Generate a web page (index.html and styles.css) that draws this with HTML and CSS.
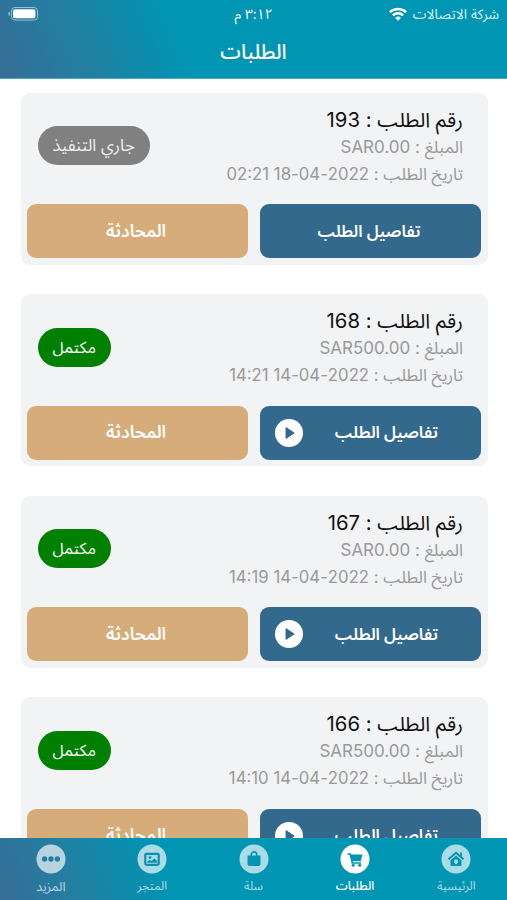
FILE: index.html
```html
<!DOCTYPE html>
<html lang="ar" dir="rtl">
<head>
<meta charset="utf-8">
<title>الطلبات</title>
<link rel="stylesheet" href="styles.css">
</head>
<body>
<div class="screen">
  <header class="header">
    <div class="status">
      <div class="carrier"><span class="ar carrier-name">شركة الاتصالات</span>
        <svg class="wifi" viewBox="0 0 18 14"><g fill="none" stroke="#fff" stroke-width="2.5"><path d="M.9 5.2a11.6 11.6 0 0 1 16.2 0"/><path d="M3.9 8.4a7.4 7.4 0 0 1 10.2 0"/></g><path fill="#fff" d="M9 13.8 6.1 10.9a4.1 4.1 0 0 1 5.8 0z"/></svg>
      </div>
      <div class="clock"><span class="ar">٣:١٢ م</span></div>
      <div class="power"><svg class="battery" viewBox="0 0 30 14"><rect x="3.5" y=".5" width="26" height="12.6" rx="3.5" fill="none" stroke="#8fc5d4"/><rect x="5" y="2.3" width="22.4" height="9" rx="2" fill="#fff"/><path d="M2 4.8v4C.7 8.400.3 7.700.3 6.800S.7 5.200 2 4.800z" fill="#8fc5d4"/></svg></div>
    </div>
    <h1 class="title"><span class="ar">الطلبات</span></h1>
  </header>
  <main class="orders">
    <article class="card">
      <div class="info">
        <div class="lines">
          <div class="number"><span class="ar">رقم الطلب</span> : <span class="num">193</span></div>
          <div class="meta"><span class="ar">المبلغ</span> : SAR0.00</div>
          <div class="meta date"><span class="ar">تاريخ الطلب</span> : 2022-04-18 02:21</div>
        </div>
        <span class="badge pending"><span class="ar">جاري التنفيذ</span></span>
      </div>
      <div class="actions"><div class="btn details"><span class="ar">تفاصيل الطلب</span></div><div class="btn chat"><span class="ar">المحادثة</span></div></div>
    </article>
    <article class="card">
      <div class="info">
        <div class="lines">
          <div class="number"><span class="ar">رقم الطلب</span> : <span class="num">168</span></div>
          <div class="meta"><span class="ar">المبلغ</span> : SAR500.00</div>
          <div class="meta date"><span class="ar">تاريخ الطلب</span> : 2022-04-14 14:21</div>
        </div>
        <span class="badge done"><span class="ar">مكتمل</span></span>
      </div>
      <div class="actions"><div class="btn details"><span class="ar">تفاصيل الطلب</span><svg class="play" viewBox="0 0 28 28"><circle cx="14" cy="14" r="14" fill="#fff"/><path d="M11.300 9v10l7.400-5z" fill="#34698e" stroke="#34698e" stroke-width="1.500" stroke-linejoin="round"/></svg></div><div class="btn chat"><span class="ar">المحادثة</span></div></div>
    </article>
    <article class="card">
      <div class="info">
        <div class="lines">
          <div class="number"><span class="ar">رقم الطلب</span> : <span class="num">167</span></div>
          <div class="meta"><span class="ar">المبلغ</span> : SAR0.00</div>
          <div class="meta date"><span class="ar">تاريخ الطلب</span> : 2022-04-14 14:19</div>
        </div>
        <span class="badge done"><span class="ar">مكتمل</span></span>
      </div>
      <div class="actions"><div class="btn details"><span class="ar">تفاصيل الطلب</span><svg class="play" viewBox="0 0 28 28"><circle cx="14" cy="14" r="14" fill="#fff"/><path d="M11.300 9v10l7.400-5z" fill="#34698e" stroke="#34698e" stroke-width="1.500" stroke-linejoin="round"/></svg></div><div class="btn chat"><span class="ar">المحادثة</span></div></div>
    </article>
    <article class="card">
      <div class="info">
        <div class="lines">
          <div class="number"><span class="ar">رقم الطلب</span> : <span class="num">166</span></div>
          <div class="meta"><span class="ar">المبلغ</span> : SAR500.00</div>
          <div class="meta date"><span class="ar">تاريخ الطلب</span> : 2022-04-14 14:10</div>
        </div>
        <span class="badge done"><span class="ar">مكتمل</span></span>
      </div>
      <div class="actions"><div class="btn details"><span class="ar">تفاصيل الطلب</span><svg class="play" viewBox="0 0 28 28"><circle cx="14" cy="14" r="14" fill="#fff"/><path d="M11.300 9v10l7.400-5z" fill="#34698e" stroke="#34698e" stroke-width="1.500" stroke-linejoin="round"/></svg></div><div class="btn chat"><span class="ar">المحادثة</span></div></div>
    </article>
  </main>
  <nav class="tabs">
    <div class="tab"><svg class="tab-icon" viewBox="0 0 30 30"><circle cx="15" cy="15" r="14.500" fill="#fff"/><path d="M7.500 15.200 15 8.700l7.500 6.500M20 8.500v4" fill="none" stroke="#0095b3" stroke-width="1.800"/><path fill="#0095b3" fill-rule="evenodd" d="m15 11.500 5.500 4.800V22h-11v-5.700zM15 15.200a2.200 2.200 0 0 0-1 4.100V20h2v-.7a2.200 2.200 0 0 0-1-4.100z"/></svg><span class="ar">الرئيسية</span></div>
    <div class="tab active"><svg class="tab-icon" viewBox="0 0 30 30"><circle cx="15" cy="15" r="14.500" fill="#fff"/><path d="M7.500 10h2.800l2 9H21" fill="none" stroke="#0095b3" stroke-width="1.600"/><path d="M10.500 10.500h12l-1.800 6.800h-8.800z" fill="#0095b3"/><circle cx="13.200" cy="21.200" r="1.500" fill="#0095b3"/><circle cx="19.600" cy="21.200" r="1.500" fill="#0095b3"/></svg><span class="ar">الطلبات</span></div>
    <div class="tab"><svg class="tab-icon" viewBox="0 0 30 30"><circle cx="15" cy="15" r="14.500" fill="#fff"/><path d="M8.500 11.500h13V20a2 2 0 0 1-2 2h-9a2 2 0 0 1-2-2z" fill="#0095b3"/><path d="M12.300 12v-1.400a2.700 2.700 0 0 1 5.400 0V12" fill="none" stroke="#0095b3" stroke-width="1.600"/></svg><span class="ar">سلة</span></div>
    <div class="tab"><svg class="tab-icon" viewBox="0 0 30 30"><circle cx="15" cy="15" r="14.500" fill="#fff"/><rect x="8.300" y="9.800" width="13.400" height="11" rx="1.200" fill="none" stroke="#0b8fae" stroke-width="2.200"/><circle cx="13" cy="13.600" r="1.400" fill="#0b8fae"/><path d="M10.300 18.800v-1.400l2.200-1.400 1.800.9 3-2.500 2.600 2.400v2z" fill="#0b8fae"/></svg><span class="ar">المتجر</span></div>
    <div class="tab"><svg class="tab-icon" viewBox="0 0 30 30"><circle cx="15" cy="15" r="14.500" fill="#fff"/><g fill="#2480a2"><circle cx="8.600" cy="15" r="2.700"/><circle cx="15" cy="15" r="2.700"/><circle cx="21.400" cy="15" r="2.700"/></g></svg><span class="ar more">المزيد</span></div>
  </nav>
</div>
</body>
</html>
```
FILE: styles.css
```css
* { box-sizing: border-box; }
body { margin: 0; background: #fff; font-family: Inter, "Noto Sans Arabic", "DejaVu Sans", sans-serif; }
.screen { width: 507px; height: 900px; display: flex; flex-direction: column; overflow: hidden; }
.ar { white-space: nowrap; }
.header { flex: none; height: 79px; color: #fff; background: linear-gradient(68deg, #376d96 0, #2180a2 18%, #0095b3 36%); border-bottom: 1px solid #48adc7; }
.status { display: grid; grid-template-columns: 1fr auto 1fr; align-items: center; height: 27px; padding: 0 8px; }
.carrier { display: flex; align-items: center; gap: 6px; font-size: 13.800px; line-height: 26px; color: #d8f3f8; }
.wifi { width: 18px; height: 14px; }
.clock { font-size: 13.800px; line-height: 26px; }
.power { display: flex; justify-content: flex-end; }
.battery { width: 30px; height: 14px; }
.title { margin: 0; height: 50px; line-height: 50px; text-align: center; font-size: 20.700px; font-weight: 500; }
.orders { flex: 1; min-height: 0; overflow: hidden; padding: 13.500px 19.500px 0 21px; display: flex; flex-direction: column; gap: 29.600px; }
.card { flex: none; height: 172px; border-radius: 9px; background: #f1f3f4; padding: 14px 6.500px 6.500px 5.500px; display: flex; flex-direction: column; justify-content: space-between; }
.info { display: flex; justify-content: space-between; align-items: center; height: 81px; padding: 0 18px 0 11px; }
.number, .meta { height: 27px; line-height: 27px; white-space: nowrap; }
.number { font-size: 20.300px; line-height: 26px; color: #111; }
.meta { font-size: 17px; color: #999; }
.date { font-size: 16.750px; }
.badge { height: 39px; line-height: 38px; border-radius: 20px; padding: 0 15px; font-size: 16px; color: #fff; margin-top: -3px; }
.pending { background: #808080; color: #eee; font-size: 16.800px; }
.done { background: #008000; }
.actions { display: grid; grid-template-columns: 1fr 1fr; gap: 12.500px; }
.btn { height: 54px; border-radius: 9px; color: #fff; font-size: 16.500px; font-weight: 600; display: flex; align-items: center; justify-content: center; padding-right: 2px; }
.details { background: #34698e; padding-right: 3px; }
.details:has(.play) { justify-content: space-between; padding: 0 43px 0 15px; }
.chat { background: #d6ac7b; font-size: 17.300px; }
.play { width: 28px; height: 28px; }
.tabs { flex: none; height: 62px; display: grid; grid-template-columns: repeat(5, 1fr); background: linear-gradient(68deg, #376d96 0, #2180a2 16%, #0095b3 33%); }
.tab { display: flex; flex-direction: column; align-items: center; padding-top: 6px; color: #fff; font-size: 12px; opacity: .67; }
.tab span { line-height: 24px; }
.tab .more { font-size: 13px; }
.active { opacity: 1; font-weight: 500; }
.tab-icon { width: 30px; height: 30px; flex: none; }
```
